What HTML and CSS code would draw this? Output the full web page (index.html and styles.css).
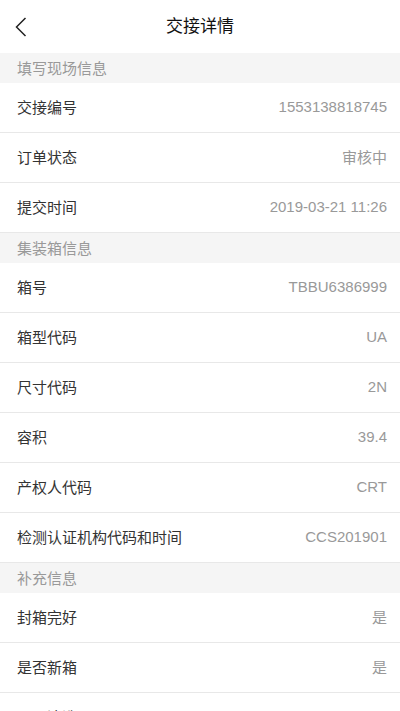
FILE: index.html
```html
<!DOCTYPE html>
<html lang="zh-CN">
<head>
<meta charset="utf-8">
<title>交接详情</title>
<link rel="stylesheet" href="styles.css">
</head>
<body>
<div class="page">
  <header class="navbar">
    <span class="back">
      <svg width="12" height="20" viewBox="0 0 12 20"><path d="M10.5 1 L1.5 10 L10.5 19" fill="none" stroke="#222" stroke-width="1.5" stroke-linejoin="miter"/></svg>
    </span>
    <h1 class="title">交接详情</h1>
  </header>

  <div class="section">填写现场信息</div>
  <div class="row"><span class="label">交接编号</span><span class="value">1553138818745</span></div>
  <div class="row"><span class="label">订单状态</span><span class="value">审核中</span></div>
  <div class="row"><span class="label">提交时间</span><span class="value">2019-03-21 11:26</span></div>

  <div class="section">集装箱信息</div>
  <div class="row"><span class="label">箱号</span><span class="value">TBBU6386999</span></div>
  <div class="row"><span class="label">箱型代码</span><span class="value">UA</span></div>
  <div class="row"><span class="label">尺寸代码</span><span class="value">2N</span></div>
  <div class="row"><span class="label">容积</span><span class="value">39.4</span></div>
  <div class="row"><span class="label">产权人代码</span><span class="value">CRT</span></div>
  <div class="row"><span class="label">检测认证机构代码和时间</span><span class="value">CCS201901</span></div>

  <div class="section">补充信息</div>
  <div class="row"><span class="label">封箱完好</span><span class="value">是</span></div>
  <div class="row"><span class="label">是否新箱</span><span class="value">是</span></div>
  <div class="row"><span class="label">是否清洗</span><span class="value">是</span></div>
</div>
</body>
</html>
```

FILE: styles.css
```css
* { box-sizing: border-box; }
html, body {
  margin: 0;
  padding: 0;
  background: #fff;
}
body {
  font-family: "Liberation Sans", "Noto Sans CJK SC", sans-serif;
  overflow: hidden;
}
.page {
  display: flex;
  flex-direction: column;
}
.navbar {
  height: 53px;
  display: flex;
  align-items: center;
  justify-content: center;
  position: relative;
  background: #fff;
}
.back {
  position: absolute;
  left: 15px;
  top: 17px;
  width: 12px;
  height: 20px;
  display: flex;
}
.title {
  margin: 0;
  font-size: 17px;
  font-weight: 400;
  color: #111;
  line-height: 1;
}
.section {
  height: 30px;
  background: #f5f5f5;
  color: #999;
  font-size: 15px;
  display: flex;
  align-items: center;
  padding: 0 0 2px 17px;
}
.row {
  height: 50px;
  border-bottom: 1px solid #e8e8e8;
  display: flex;
  align-items: center;
  justify-content: space-between;
  padding: 0 13px 2px 17px;
}
.label {
  font-size: 15px;
  color: #333;
}
.value {
  font-size: 15px;
  color: #999;
}
```
